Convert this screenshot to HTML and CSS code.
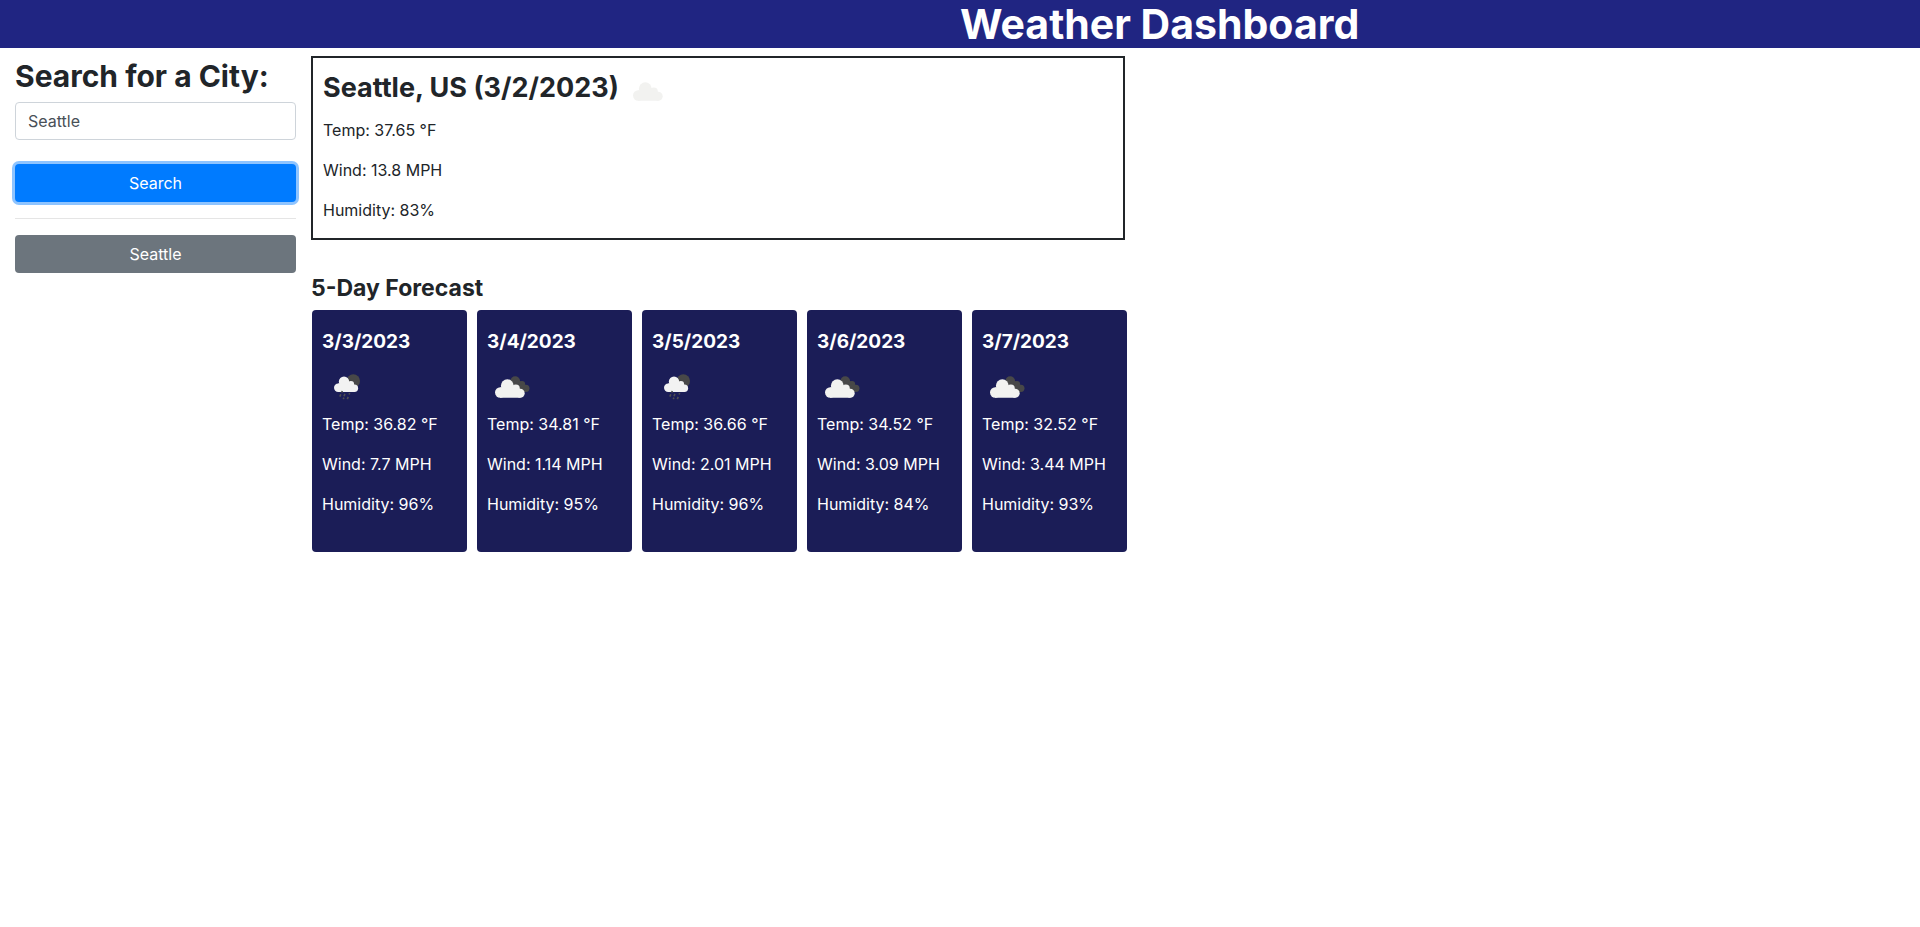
FILE: index.html
```html
<!DOCTYPE html>
<html lang="en">
<head>
<meta charset="utf-8">
<title>Weather Dashboard</title>
<link rel="stylesheet" href="styles.css">
</head>
<body>
<svg class="sprite" aria-hidden="true">
  <symbol id="cloud" viewBox="0 0 50 50">
    <g fill="#f2f2f0">
      <circle cx="13.200" cy="30.500" r="5.200"/>
      <circle cx="20.300" cy="23.700" r="6.400"/>
      <circle cx="28.800" cy="26.600" r="4"/>
      <circle cx="33.200" cy="31.200" r="4.500"/>
      <path d="M13 25.500h16l4.500 3v7.200H13z"/>
    </g>
  </symbol>
  <symbol id="broken-clouds" viewBox="0 0 50 50">
    <g fill="#484848">
      <circle cx="28.200" cy="19.200" r="4.900"/>
      <circle cx="34.800" cy="22.500" r="3.400"/>
      <circle cx="38.900" cy="26.300" r="3.600"/>
      <path d="M26 19h7l5 5v5.900h-5l-8-8z"/>
    </g>
    <use href="#cloud"/>
  </symbol>
  <symbol id="rain" viewBox="0 0 50 50">
    <circle cx="31.300" cy="19" r="6.700" fill="#484848"/>
    <g fill="#f2f2f2">
      <circle cx="16.200" cy="25.800" r="4.200"/>
      <circle cx="22" cy="19.700" r="5.200"/>
      <circle cx="28.900" cy="22.200" r="3.200"/>
      <circle cx="32.400" cy="26.300" r="3.700"/>
      <path d="M16 21.500h13l3.600 3V30H16z"/>
    </g>
    <path d="M20.300 29l-.6 1.600M18.800 32.200l-.9 2.400M22.900 31.900l-.9 2.400M27.700 30.900l-.6 1.700M21.900 35.600l-.6 1.500M26.200 34.900l-.9 2.200" stroke="#505050" stroke-width="1.600" fill="none"/>
  </symbol>
</svg>

<header class="banner"><h1>Weather Dashboard</h1></header>

<div class="layout">
  <aside class="sidebar">
    <form class="search">
      <h2><label for="city">Search for a City:</label></h2>
      <input class="field" id="city" type="text" value="Seattle">
      <button class="btn btn-primary" type="button">Search</button>
    </form>
    <hr>
    <button class="btn btn-secondary" type="button">Seattle</button>
  </aside>

  <main>
    <section class="current">
      <h3>Seattle, US (3/2/2023) <svg class="icon"><use href="#cloud"/></svg></h3>
      <p>Temp: 37.65 °F</p>
      <p>Wind: 13.8 MPH</p>
      <p>Humidity: 83%</p>
    </section>

    <h4>5-Day Forecast</h4>
    <section class="forecast">
      <article class="card">
        <h5>3/3/2023</h5>
        <svg class="icon"><use href="#rain"/></svg>
        <p>Temp: 36.82 °F</p>
        <p>Wind: 7.7 MPH</p>
        <p>Humidity: 96%</p>
      </article>
      <article class="card">
        <h5>3/4/2023</h5>
        <svg class="icon"><use href="#broken-clouds"/></svg>
        <p>Temp: 34.81 °F</p>
        <p>Wind: 1.14 MPH</p>
        <p>Humidity: 95%</p>
      </article>
      <article class="card">
        <h5>3/5/2023</h5>
        <svg class="icon"><use href="#rain"/></svg>
        <p>Temp: 36.66 °F</p>
        <p>Wind: 2.01 MPH</p>
        <p>Humidity: 96%</p>
      </article>
      <article class="card">
        <h5>3/6/2023</h5>
        <svg class="icon"><use href="#broken-clouds"/></svg>
        <p>Temp: 34.52 °F</p>
        <p>Wind: 3.09 MPH</p>
        <p>Humidity: 84%</p>
      </article>
      <article class="card">
        <h5>3/7/2023</h5>
        <svg class="icon"><use href="#broken-clouds"/></svg>
        <p>Temp: 32.52 °F</p>
        <p>Wind: 3.44 MPH</p>
        <p>Humidity: 93%</p>
      </article>
    </section>
  </main>
</div>
</body>
</html>
```
FILE: styles.css
```css
* { box-sizing: border-box; }

body {
  margin: 0;
  background: #fff;
  color: #212529;
  font: 16px/24px Inter, "Liberation Sans", sans-serif;
}

h1, h2, h3, h4, h5, p { margin: 0; }

.sprite { position: absolute; width: 0; height: 0; }

.icon { width: 50px; height: 50px; vertical-align: middle; }

.banner {
  padding-left: 50%;
  background: #202582;
  color: #fff;
}

.banner h1 { font-size: 41px; line-height: 48px; }

.layout {
  display: grid;
  grid-template-columns: 311fr 816fr 793fr;
  padding-top: 8px;
}

.sidebar { padding: 0 15px; }

.sidebar h2 {
  margin-bottom: 6px;
  font-size: 30px;
  line-height: 40px;
  white-space: nowrap;
}

.field, .btn {
  display: block;
  width: 100%;
  height: 38px;
  padding: 6px 12px;
  border: 1px solid transparent;
  border-radius: 4px;
  font: inherit;
}

.field {
  margin-bottom: 24px;
  border-color: #ced4da;
  background: #fff;
  color: #495057;
}

.btn { color: #fff; }

.btn-primary {
  background: #007bff;
  box-shadow: 0 0 0 3px #8ec4ff;
}

.btn-secondary { background: #6c757d; }

hr {
  margin: 16px 0;
  border: 0;
  border-top: 1px solid #e5e5e5;
}

.current {
  margin: 0 2px 32px 0;
  padding: 7px 10px 0;
  border: 2px solid #212529;
}

.current h3 {
  margin-bottom: 3px;
  font-size: 27px;
  line-height: 34px;
}

.current p, .card p { margin-bottom: 16px; }

h4 {
  margin-bottom: 6px;
  font-size: 23px;
  line-height: 32px;
}

.forecast {
  display: grid;
  grid-template-columns: repeat(5, 1fr);
  gap: 10px;
  padding-left: 1px;
}

.card {
  padding: 20px 10px;
  border-radius: 4px;
  background: #1b1d57;
  color: #fff;
}

.card h5 {
  margin-bottom: 8px;
  font-size: 19px;
  line-height: 24px;
}

.card .icon { display: block; }
```
